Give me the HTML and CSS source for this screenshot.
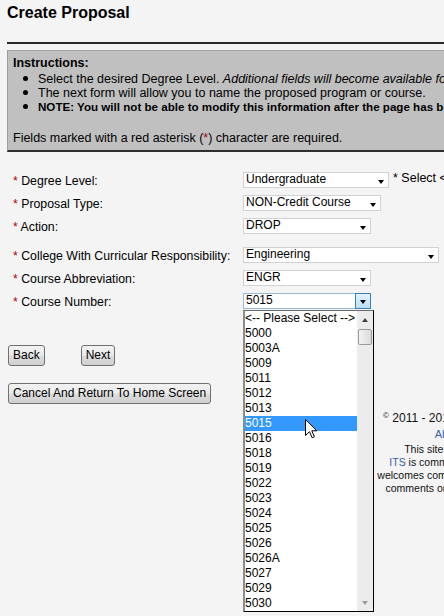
FILE: index.html
```html
<!DOCTYPE html>
<html>
<head>
<meta charset="utf-8">
<title>Create Proposal</title>
<link rel="stylesheet" href="styles.css">
</head>
<body>
<div class="page">
  <h1 class="title">Create Proposal</h1>
  <div class="rule"></div>

  <div class="instructions">
    <div class="inst-head">Instructions:</div>
    <ul class="inst-list">
      <li>Select the desired Degree Level. <em>Additional fields will become available for selection as you make your choices.</em></li>
      <li>The next form will allow you to name the proposed program or course.</li>
      <li><strong>NOTE: You will not be able to modify this information after the page has been submitted.</strong></li>
    </ul>
    <p class="req-note">Fields marked with a red asterisk (<span class="req">*</span>) character are required.</p>
  </div>

  <div class="form">
    <div class="row">
      <span class="label"><span class="req">*</span> Degree Level:</span>
      <div class="select w-degree"><span class="value">Undergraduate</span><span class="arrow"></span></div>
      <span class="hint">* Select &lt;Undergraduate&gt; or &lt;Graduate&gt; to continue</span>
    </div>
    <div class="row">
      <span class="label"><span class="req">*</span> Proposal Type:</span>
      <div class="select w-type"><span class="value">NON-Credit Course</span><span class="arrow"></span></div>
    </div>
    <div class="row">
      <span class="label"><span class="req">*</span> Action:</span>
      <div class="select w-short"><span class="value">DROP</span><span class="arrow"></span></div>
    </div>
    <div class="row row-spaced">
      <span class="label"><span class="req">*</span> College With Curricular Responsibility:</span>
      <div class="select w-college"><span class="value">Engineering</span><span class="arrow"></span></div>
    </div>
    <div class="row">
      <span class="label"><span class="req">*</span> Course Abbreviation:</span>
      <div class="select w-short"><span class="value">ENGR</span><span class="arrow"></span></div>
    </div>
    <div class="row">
      <span class="label"><span class="req">*</span> Course Number:</span>
      <div class="select w-short focused">
        <span class="value">5015</span>
        <span class="drop-btn"><span class="arrow"></span></span>
        <div class="listbox">
          <div class="options">
            <div class="option">&lt;-- Please Select --&gt;</div>
            <div class="option">5000</div>
            <div class="option">5003A</div>
            <div class="option">5009</div>
            <div class="option">5011</div>
            <div class="option">5012</div>
            <div class="option">5013</div>
            <div class="option selected">5015</div>
            <div class="option">5016</div>
            <div class="option">5018</div>
            <div class="option">5019</div>
            <div class="option">5022</div>
            <div class="option">5023</div>
            <div class="option">5024</div>
            <div class="option">5025</div>
            <div class="option">5026</div>
            <div class="option">5026A</div>
            <div class="option">5027</div>
            <div class="option">5029</div>
            <div class="option">5030</div>
          </div>
          <div class="scrollbar">
            <span class="sb-btn"><span class="sb-up"></span></span>
            <span class="sb-thumb"></span>
            <span class="sb-track"></span>
            <span class="sb-btn"><span class="sb-down"></span></span>
          </div>
          <svg class="cursor" width="13" height="20" viewBox="0 0 13 20">
            <path d="M0.5 0.5 V16.5 L4.5 12.7 L7.2 18.8 L9.4 17.8 L6.8 11.8 H11.8 Z" fill="#fff" stroke="#000" stroke-width="1" stroke-linejoin="miter"/>
          </svg>
        </div>
      </div>
    </div>
  </div>

  <div class="nav-buttons">
    <button class="btn" type="button">Back</button>
    <button class="btn" type="button">Next</button>
  </div>
  <div class="cancel-row">
    <button class="btn" type="button">Cancel And Return To Home Screen</button>
  </div>

  <div class="footer">
    <div class="f1"><sup class="copy">&copy;</sup> 2011 - 2014 Florida State University</div>
    <div class="f2"><a href="#">All Rights Reserved</a></div>
    <div class="f3">This site is maintained by the ITS.</div>
    <div class="f4"><a href="#">ITS</a> is committed to providing accessible</div>
    <div class="f5">welcomes comments and suggestions on this</div>
    <div class="f6">comments or concerns to the webmasters</div>
  </div>
</div>
</body>
</html>
```

FILE: styles.css
```css
html {
  overflow: hidden;
  background: #f4f4f4;
}

body {
  margin: 0;
  padding: 0;
  min-height: 616px;
  background: #f4f4f4;
  font-family: "Liberation Sans", Arial, sans-serif;
  font-size: 12.5px;
  color: #000;
}

.page {
  width: 1000px;
  padding-left: 7px;
}

.title {
  margin: 4px 0 0 0;
  font-size: 16px;
  line-height: 18px;
  font-weight: bold;
}

.rule {
  margin-top: 20px;
  border-top: 2px solid #2a2a2a;
}

.instructions {
  margin-top: 6px;
  background: #c0c0c0;
  border-top: 1px solid #a4a4a4;
  border-left: 1px solid #9c9c9c;
  border-bottom: 2px solid #2f2f2f;
  padding: 5px 0 5px 5px;
  line-height: 14px;
  white-space: nowrap;
}

.inst-head {
  font-weight: bold;
}

.inst-list {
  list-style: none;
  margin: 2px 0 0 0;
  padding: 0;
}

.inst-list li::before {
  content: "";
  display: inline-block;
  width: 5px;
  height: 5px;
  border-radius: 50%;
  background: #000;
  margin: 0 10px 2px 10px;
  vertical-align: middle;
}

.inst-list strong {
  font-size: 11.6px;
}

.req-note {
  margin: 17px 0 0 0;
}

.req {
  color: #b00000;
}

.form {
  margin-top: 20px;
  padding-left: 6px;
  display: flex;
  flex-direction: column;
  gap: 7px;
}

.row {
  display: flex;
  align-items: flex-start;
  white-space: nowrap;
  height: 16px;
}

.row-spaced {
  margin-top: 6px;
}

.label {
  width: 230px;
  flex: none;
  margin-top: 3px;
  line-height: 13px;
  font-size: 12.3px;
}

.select {
  position: relative;
  box-sizing: border-box;
  height: 16px;
  display: flex;
  align-items: flex-start;
  background: #fff;
  border: 1px solid #d2d2d2;
  font-size: 12px;
  line-height: 13px;
  flex: none;
}

.select .value {
  flex: 1;
  padding-left: 2px;
}

.select > .arrow {
  margin: 7px 4px 0 0;
}

.arrow {
  width: 0;
  height: 0;
  border-left: 3.5px solid transparent;
  border-right: 3.5px solid transparent;
  border-top: 4px solid #000;
}

.w-degree { width: 146px; }
.w-type { width: 138px; }
.w-short { width: 128px; }
.w-college { width: 196px; }

.hint {
  margin-left: 4px;
  line-height: 13px;
}

.select.focused {
  border-color: #98b9d8;
}

.drop-btn {
  box-sizing: border-box;
  width: 16px;
  height: 16px;
  margin: -1px -1px 0 0;
  border: 1px solid #3c7fb1;
  background: linear-gradient(#e3f3fc, #b9def5);
  display: flex;
  justify-content: center;
  padding-top: 6px;
}

.listbox {
  position: absolute;
  left: -1px;
  top: 16px;
  width: 131px;
  box-sizing: border-box;
  background: #fff;
  border-top: 1px solid #6a6a6a;
  border-left: 2px solid #8c8c8c;
  border-right: 1px solid #000;
  border-bottom: 1px solid #000;
  display: flex;
  z-index: 5;
}

.options {
  flex: 1;
  font-size: 12px;
  line-height: 15px;
}

.option {
  height: 15px;
}

.option.selected {
  background: #3399ff;
  color: #fff;
}

.scrollbar {
  width: 16px;
  flex: none;
  background: #ececec;
  display: flex;
  flex-direction: column;
  align-items: center;
}

.sb-btn {
  height: 17px;
  width: 16px;
  display: flex;
  align-items: center;
  justify-content: center;
}

.sb-up {
  width: 0;
  height: 0;
  border-left: 3.5px solid transparent;
  border-right: 3.5px solid transparent;
  border-bottom: 4px solid #404040;
}

.sb-down {
  width: 0;
  height: 0;
  border-left: 3.5px solid transparent;
  border-right: 3.5px solid transparent;
  border-top: 4px solid #9c9c9c;
}

.sb-thumb {
  box-sizing: border-box;
  width: 14px;
  height: 16px;
  margin-top: 1px;
  border: 1px solid #9a9a9a;
  border-radius: 2px;
  background: linear-gradient(90deg, #f3f3f3, #dadada);
}

.sb-track {
  flex: 1;
}

.cursor {
  position: absolute;
  left: 60px;
  top: 108px;
}

.nav-buttons {
  margin-top: 36px;
  display: flex;
  gap: 36px;
  padding-left: 1px;
}

.cancel-row {
  margin-top: 17px;
  padding-left: 1px;
}

.btn {
  box-sizing: border-box;
  height: 21px;
  margin: 0;
  padding: 0 4px;
  border: 1px solid #707070;
  border-radius: 3px;
  background: linear-gradient(#f2f2f2 0%, #ebebeb 48%, #dddddd 52%, #cfcfcf 100%);
  font-family: "Liberation Sans", Arial, sans-serif;
  font-size: 12px;
  line-height: 15px;
  color: #000;
}

.footer {
  margin-top: 7px;
  margin-left: 276px;
  width: 400px;
  text-align: center;
  white-space: nowrap;
  color: #111;
}

.footer a {
  color: #3a5fa8;
  text-decoration: none;
}

.f1 {
  font-size: 12px;
  line-height: 14px;
}

.copy {
  font-size: 8px;
  vertical-align: 4px;
  line-height: 0;
}

.f2 {
  font-size: 11px;
  line-height: 18px;
}

.f3, .f4, .f5, .f6 {
  font-size: 10.5px;
  line-height: 13px;
}
```
